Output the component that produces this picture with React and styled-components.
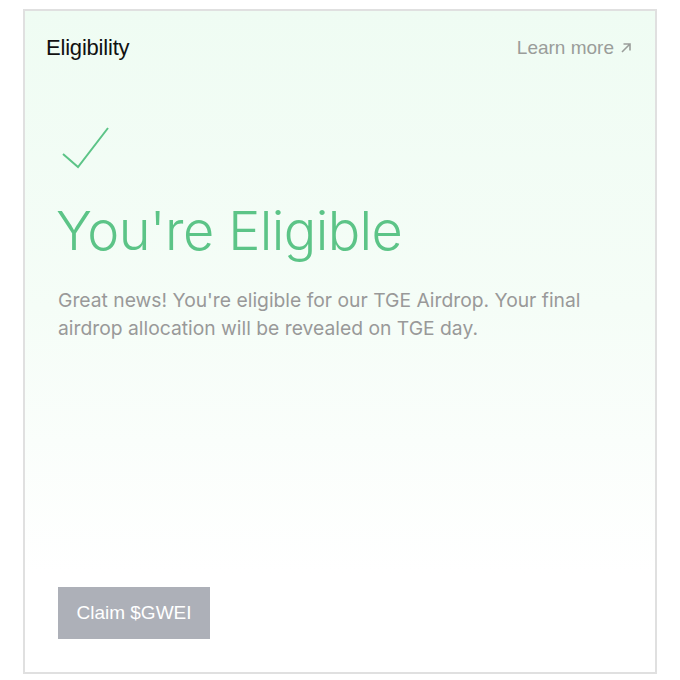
import React from 'react';
import styled, { createGlobalStyle } from 'styled-components';

const GlobalStyle = createGlobalStyle`
  body {
    margin: 0;
    background: #ffffff;
    font-family: "Liberation Sans", Arial, sans-serif;
  }
`;

// Outer page padding around the card
const Page = styled.div`
  padding: 9px 23px 6px;
`;

// The eligibility card with its soft green wash
const Card = styled.section`
  box-sizing: border-box;
  height: 665px;
  border: 2px solid #e0e0e0;
  background: linear-gradient(180deg, #effcf3 0%, #f5fdf7 45%, #ffffff 85%);
  display: flex;
  flex-direction: column;
  padding: 24px 23px 33px 21px;
`;

const Header = styled.header`
  display: flex;
  justify-content: space-between;
  align-items: center;
`;

const HeaderTitle = styled.h3`
  margin: 0;
  font-size: 22px;
  font-weight: 400;
  color: #111;
  letter-spacing: -0.2px;
`;

const LearnMore = styled.a`
  display: flex;
  align-items: center;
  gap: 6px;
  font-size: 19px;
  color: #9a9d9a;
  text-decoration: none;
`;

const Body = styled.div`
  padding: 0 0 0 12px;
  margin-top: 66px;
  flex: 1;
`;

const Check = styled.svg`
  display: block;
  margin-left: 4px;
`;

const Title = styled.h1`
  margin: 30px 0 0 -2px;
  font-family: Inter, sans-serif;
  font-weight: 300;
  font-size: 54px;
  line-height: 1.2;
  color: #5cc487;
  letter-spacing: -0.6px;
`;

const Text = styled.p`
  margin: 22px 0 0;
  font-family: Inter, sans-serif;
  font-size: 19.3px;
  line-height: 28px;
  color: #999999;
  max-width: 560px;
`;

const ClaimButton = styled.button`
  align-self: flex-start;
  margin-left: 12px;
  width: 152px;
  height: 52px;
  border: none;
  background: #adb0b8;
  color: #ffffff;
  font-family: "Liberation Sans", Arial, sans-serif;
  font-size: 19px;
`;

const App = () => {
  return (
    <Page>
      <GlobalStyle />
      <Card>
        <Header>
          <HeaderTitle>Eligibility</HeaderTitle>
          <LearnMore href="#">
            Learn more
            <svg width="12" height="12" viewBox="0 0 12 12" fill="none" stroke="#9a9d9a" strokeWidth="1.6">
              <path d="M2 10L10 2M3.5 2H10V8.5" />
            </svg>
          </LearnMore>
        </Header>
        <Body>
          <Check width="48" height="42" viewBox="0 0 48 42" fill="none" stroke="#5cc487" strokeWidth="2">
            <path d="M1 27L16 40L46 1" />
          </Check>
          <Title>You're Eligible</Title>
          <Text>
            Great news! You're eligible for our TGE Airdrop. Your final airdrop allocation will be revealed on TGE day.
          </Text>
        </Body>
        <ClaimButton>Claim $GWEI</ClaimButton>
      </Card>
    </Page>
  );
};

export default App;
